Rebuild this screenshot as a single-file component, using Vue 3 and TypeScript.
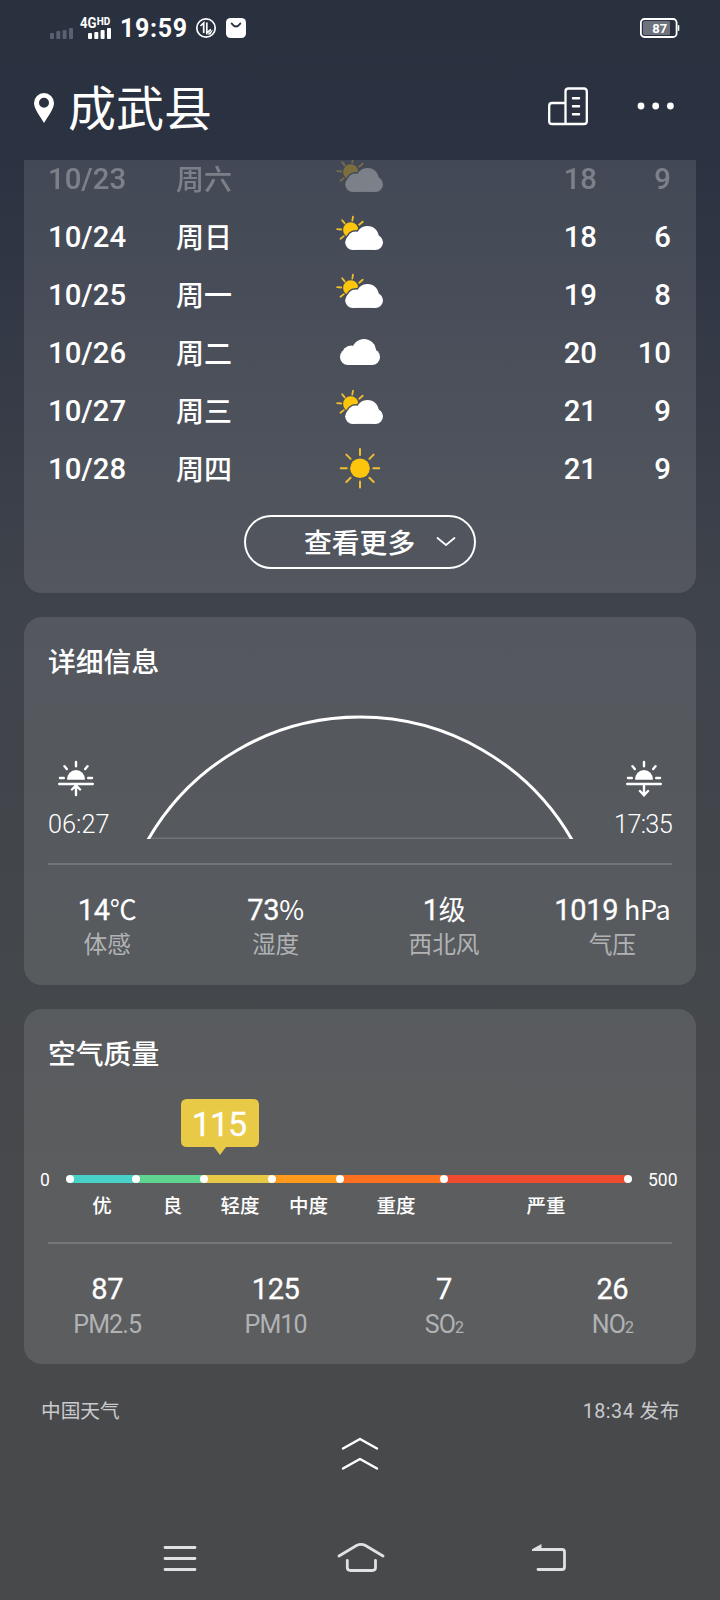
<script setup lang="ts">
type Sky = 'partly' | 'cloudy' | 'sunny'

interface Day {
  date: string
  week: string
  sky: Sky
  high: number
  low: number
}

interface Stat {
  value: string
  unit?: string
  label: string
  sub?: string
}

const days: Day[] = [
  { date: '10/23', week: '周六', sky: 'partly', high: 18, low: 9 },
  { date: '10/24', week: '周日', sky: 'partly', high: 18, low: 6 },
  { date: '10/25', week: '周一', sky: 'partly', high: 19, low: 8 },
  { date: '10/26', week: '周二', sky: 'cloudy', high: 20, low: 10 },
  { date: '10/27', week: '周三', sky: 'partly', high: 21, low: 9 },
  { date: '10/28', week: '周四', sky: 'sunny', high: 21, low: 9 },
]

const details: Stat[] = [
  { value: '14', unit: '℃', label: '体感' },
  { value: '73', unit: '%', label: '湿度' },
  { value: '1', unit: '级', label: '西北风' },
  { value: '1019', unit: ' hPa', label: '气压' },
]

const pollutants: Stat[] = [
  { value: '87', label: 'PM2.5' },
  { value: '125', label: 'PM10' },
  { value: '7', label: 'SO', sub: '2' },
  { value: '26', label: 'NO', sub: '2' },
]

const levels: string[] = ['优', '良', '轻度', '中度', '重度', '严重']
const stops: number[] = [4, 70, 138, 206, 274, 378, 562]
const colors: string[] = ['#48d1c8', '#5fd390', '#e8c847', '#fd9a1c', '#fd7020', '#ee4a2f']
const rays: number[] = [0, 45, 90, 135, 180, 225, 270, 315]
</script>

<template>
  <div class="screen">
    <div class="status">
      <svg class="signals" width="66" height="26" viewBox="0 0 66 26">
        <g fill="#596070">
          <rect x="2" y="18" width="4" height="6" rx="1" />
          <rect x="8.300" y="16" width="4" height="8" rx="1" />
          <rect x="14.600" y="15" width="4" height="9" rx="1" />
          <rect x="21" y="13" width="4" height="11" rx="1" />
        </g>
        <g fill="#fff">
          <rect x="40" y="18" width="4" height="6" rx="1" />
          <rect x="46.300" y="17" width="4" height="7" rx="1" />
          <rect x="52.600" y="15" width="4" height="9" rx="1" />
          <rect x="59" y="13" width="4" height="11" rx="1" />
          <text x="32" y="12.500" font-size="14" font-weight="700" textLength="16.500" lengthAdjust="spacingAndGlyphs">4G</text>
          <text x="48.800" y="9.500" font-size="10" font-weight="800" textLength="13.500" lengthAdjust="spacingAndGlyphs">HD</text>
        </g>
      </svg>
      <span class="clock">19:59</span>
      <svg class="round" width="22" height="22" viewBox="0 0 22 22" fill="none" stroke="#fff">
        <circle cx="11" cy="11" r="9.200" stroke-width="1.700" />
        <path d="M5.500 9 L8.700 6 V16 M11.800 5.500 V16 L16 12.500" stroke-width="1.700" />
        <path d="M12 17.500 L18 12.500 L15.500 17.500 Z" fill="#fff" stroke="none" />
      </svg>
      <svg class="bag" width="20" height="20" viewBox="0 0 20 20">
        <rect width="20" height="20" rx="4.500" fill="#fff" />
        <path d="M5.700 5.500 Q10 11.500 14.300 5.500" fill="none" stroke="#29303e" stroke-width="2" stroke-linecap="round" />
      </svg>
      <svg class="battery" width="42" height="22" viewBox="0 0 42 22">
        <rect x="1.900" y="2" width="35.700" height="18" rx="3.500" fill="none" stroke="#fff" stroke-width="1.800" />
        <rect x="4" y="4" width="27" height="14" rx="1.500" fill="#6d727c" />
        <rect x="38.800" y="8" width="1.500" height="6" rx=".7" fill="#fff" />
        <text x="20.700" y="15.600" font-size="13" font-weight="700" text-anchor="middle" fill="#fff">87</text>
      </svg>
    </div>

    <header class="header">
      <svg class="pin" width="20" height="31" viewBox="0 0 20 31">
        <path fill="#fff" fill-rule="evenodd" d="M10 0 A10 10 0 0 1 20 10 C20 16 14 23 10 30 C6 23 0 16 0 10 A10 10 0 0 1 10 0 Z M10 4.700 A5 5 0 1 0 10 14.700 A5 5 0 1 0 10 4.700 Z" />
      </svg>
      <h1>成武县</h1>
      <svg class="city" width="42" height="40" viewBox="0 0 42 40" fill="none" stroke="#fff" stroke-width="2.300" stroke-linecap="round">
        <path d="M18.500 16 H5 Q2.200 16 2.200 19 V34.500 Q2.200 37 5 37 H37 Q39.800 37 39.800 34.500 V4.500 Q39.800 1.500 37 1.500 H21.500 Q18.500 1.500 18.500 4.500 V37" />
        <path d="M26 11.300 H32 M26 19.300 H32 M26 27.300 H32" stroke-width="2.500" />
      </svg>
      <svg class="more" width="38" height="8" viewBox="0 0 38 8" fill="#fff">
        <circle cx="4" cy="4" r="3.400" /><circle cx="18.700" cy="4" r="3.400" /><circle cx="33.400" cy="4" r="3.400" />
      </svg>
    </header>

    <section class="card forecast">
      <div class="days">
        <div v-for="(d, i) in days" :key="d.date" class="day" :class="{ faded: i === 0 }">
          <span class="date">{{ d.date }}</span>
          <span class="week">{{ d.week }}</span>
          <svg class="sky" width="60" height="58" viewBox="0 0 60 58">
            <template v-if="d.sky === 'partly'">
              <mask :id="`gap-${i}`">
                <rect width="60" height="58" fill="#fff" />
                <g fill="#000" stroke="#000" stroke-width="3">
                  <circle cx="22.800" cy="33.300" r="7.600" />
                  <circle cx="25.600" cy="31" r="8.500" />
                  <circle cx="37.500" cy="28.300" r="11.300" />
                </g>
              </mask>
              <g :mask="`url(#gap-${i})`">
                <circle cx="20.700" cy="20.800" r="7.600" fill="#fec50d" />
                <path d="M22.300 11.700 L23 7.700 M29.200 15.700 L32.700 12.700 M14.700 14.300 L12.200 11.300 M11.200 20.500 L7.200 20.200 M13.800 27.100 L10.500 29.700" stroke="#efbe2e" stroke-width="1.800" stroke-linecap="round" />
              </g>
              <g fill="#fff">
                <circle cx="22.800" cy="33.300" r="7.600" />
                <circle cx="25.600" cy="31" r="8.500" />
                <circle cx="37.500" cy="28.300" r="11.300" />
                <circle cx="45.400" cy="33.300" r="7.600" />
                <rect x="22.800" y="27" width="22.600" height="13.900" />
              </g>
            </template>
            <g v-else-if="d.sky === 'cloudy'" fill="#fff">
              <circle cx="18" cy="32" r="8" />
              <circle cx="21" cy="29.500" r="9" />
              <circle cx="34" cy="26" r="12" />
              <circle cx="42" cy="32" r="8" />
              <rect x="18" y="26" width="24" height="14" />
            </g>
            <g v-else>
              <circle cx="30" cy="27.300" r="9.800" fill="#fec50d" />
              <path v-for="r in rays" :key="r" d="M30 14 V8" :transform="`rotate(${r} 30 27.300)`" stroke="#efbe2e" stroke-width="2" stroke-linecap="round" />
            </g>
          </svg>
          <span class="high">{{ d.high }}</span>
          <span class="low">{{ d.low }}</span>
        </div>
      </div>
      <button class="expand">
        <span>查看更多</span>
        <svg width="20" height="10" viewBox="0 0 20 10" fill="none" stroke="#fff" stroke-width="1.700" stroke-linecap="round" stroke-linejoin="round">
          <path d="M1.500 1 L10 8 L18.500 1" />
        </svg>
      </button>
    </section>

    <section class="card detail">
      <h2>详细信息</h2>
      <div class="sun-row">
        <div class="sun-time">
          <svg width="38" height="38" viewBox="0 0 38 38" fill="none" stroke="#fff" stroke-width="2.400" stroke-linecap="round">
            <path d="M10 20.800 A9 9.800 0 0 1 28 20.800 Z" fill="#fff" stroke="none" />
            <path d="M19 3 V7.200 M7.500 7.200 L9.800 10 M30.500 7.200 L28.200 10 M3 19 H6.800 M31.200 19 H35 M2.200 25 H35.800 M19 27 V36 M15 30.500 L19 26.500 L23 30.500" />
          </svg>
          <span>06:27</span>
        </div>
        <svg class="arc" width="428" height="124" viewBox="0 0 428 124" fill="none">
          <path d="M5 123.200 H423" stroke="#fff" stroke-opacity=".16" stroke-width="1.500" />
          <path d="M1.600 125.500 A244.500 244.500 0 0 1 426.400 125.500" stroke="#fff" stroke-width="3" />
        </svg>
        <div class="sun-time right">
          <svg width="38" height="38" viewBox="0 0 38 38" fill="none" stroke="#fff" stroke-width="2.400" stroke-linecap="round">
            <path d="M10 20.800 A9 9.800 0 0 1 28 20.800 Z" fill="#fff" stroke="none" />
            <path d="M19 3 V7.200 M7.500 7.200 L9.800 10 M30.500 7.200 L28.200 10 M3 19 H6.800 M31.200 19 H35 M2.200 25 H35.800 M19 26 V36 M15 32 L19 36.300 L23 32" />
          </svg>
          <span>17:35</span>
        </div>
      </div>
      <div class="rule"></div>
      <div class="stats">
        <div v-for="s in details" :key="s.label" class="stat">
          <div class="value">{{ s.value }}<span class="unit">{{ s.unit }}</span></div>
          <div class="label">{{ s.label }}</div>
        </div>
      </div>
    </section>

    <section class="card air">
      <h2>空气质量</h2>
      <div class="badge">115</div>
      <div class="scale">
        <span class="min">0</span>
        <svg class="track" width="566" height="8" viewBox="0 0 566 8">
          <rect v-for="(c, i) in colors" :key="c" :x="stops[i]" y="0" :width="stops[i + 1] - stops[i]" height="8" :fill="c" />
          <circle v-for="s in stops" :key="s" :cx="s" cy="4" r="4" fill="#fff" />
        </svg>
        <span class="max">500</span>
      </div>
      <div class="levels">
        <span v-for="l in levels" :key="l">{{ l }}</span>
      </div>
      <div class="rule"></div>
      <div class="stats">
        <div v-for="s in pollutants" :key="s.label" class="stat">
          <div class="value">{{ s.value }}</div>
          <div class="label latin">{{ s.label }}<small v-if="s.sub">{{ s.sub }}</small></div>
        </div>
      </div>
    </section>

    <footer class="source">
      <span>中国天气</span>
      <span class="time">18:34 发布</span>
    </footer>
    <svg class="pull" width="40" height="36" viewBox="0 0 40 36" fill="none" stroke="#fff" stroke-width="2.500" stroke-linecap="round" stroke-linejoin="round">
      <path d="M3 12.500 L20 3 L37 12.500 M3 32.500 L20 23 L37 32.500" />
    </svg>
    <nav class="nav">
      <svg width="36" height="32" viewBox="0 0 36 32" stroke="#e0e1e3" stroke-width="2.800" stroke-linecap="round">
        <path d="M3 5.500 H33 M3 16.500 H33 M3 27.500 H33" />
      </svg>
      <svg class="home" width="50" height="32" viewBox="0 0 50 32" fill="none" stroke="#e0e1e3" stroke-width="2.800" stroke-linecap="round">
        <path d="M3 14 L20.500 3.500 Q25 1.200 29.500 3.500 L47 14" />
        <path d="M11.300 18.500 V25.500 Q11.300 28.500 14.500 28.500 H36.300 Q39.500 28.500 39.500 25.500 V18.500" />
      </svg>
      <svg width="38" height="32" viewBox="0 0 38 32" fill="none" stroke="#e0e1e3" stroke-width="2.800" stroke-linecap="round">
        <path d="M7 7.500 H32 Q34.500 7.500 34.500 10 V25 Q34.500 27.500 32 27.500 H8" />
        <path d="M2 8.900 V7.200 L11.500 2 V8.900 Z" fill="#e0e1e3" stroke="none" />
      </svg>
    </nav>
  </div>
</template>

<style>
html,
body {
  margin: 0;
  background: #48494c;
}
</style>

<style scoped>
.screen {
  box-sizing: border-box;
  width: 720px;
  height: 1600px;
  overflow: hidden;
  display: flex;
  flex-direction: column;
  color: #fff;
  font-family: Roboto, "Noto Sans CJK SC", sans-serif;
  background: linear-gradient(180deg, #29303e 0, #2b3241 160px, #343a46 350px, #3f434b 600px, #44474b 990px, #48494c 1200px, #48494b 1600px);
}
.status {
  height: 56px;
  display: flex;
  align-items: center;
  padding: 0 39px 0 48px;
}
.clock {
  margin-left: 6px;
  padding-top: 1px;
  width: 70px;
  font-size: 25px;
  line-height: 30px;
  font-weight: 700;
  letter-spacing: 0.7px;
}
.round { margin-left: 5px; }
.bag { margin-left: 9px; }
.battery { margin-left: auto; }
.header {
  height: 104px;
  display: flex;
  align-items: center;
  padding: 0 45px 4px 34px;
  box-sizing: border-box;
}
.pin { margin-top: 4px; }
.header h1 {
  margin: 8px auto 0 14px;
  font-size: 48px;
  line-height: 60px;
  font-weight: 400;
}
.city { margin: 2px 48px 0 0; }
.card {
  box-sizing: border-box;
  margin: 0 24px 24px;
  border-radius: 18px;
  background: rgba(255, 255, 255, 0.11);
  overflow: hidden;
  flex: none;
}
.forecast {
  height: 433px;
  border-radius: 0 0 18px 18px;
  display: flex;
  flex-direction: column;
  align-items: center;
}
.days {
  width: 100%;
  margin-top: -10px;
}
.day {
  height: 58px;
  padding: 0 25px 0 24px;
  display: grid;
  grid-template-columns: 128px 154px 60px 1fr 74px;
  grid-template-rows: 58px;
  align-items: start;
  font-size: 29.300px;
  line-height: 58px;
  font-weight: 500;
}
.faded { opacity: 0.3; }
.week {
  line-height: 61px;
  font-size: 28px;
}
.sky {
  display: block;
  margin-top: 0.5px;
}
.high,
.low { text-align: right; }
.expand {
  box-sizing: border-box;
  width: 232px;
  height: 54px;
  margin: 17px 0 0;
  padding: 0 18px 0 58px;
  display: flex;
  align-items: center;
  justify-content: space-between;
  border: 2px solid #fff;
  border-radius: 27px;
  background: none;
  color: #fff;
  font: 500 27.800px/48px Roboto, "Noto Sans CJK SC", sans-serif;
}
.expand span { padding-top: 4px; }
h2 {
  margin: 0;
  padding: 0 24px;
  font-size: 27.800px;
  line-height: 40px;
  font-weight: 500;
}
.detail {
  height: 368px;
  padding-top: 26px;
}
.sun-row {
  height: 124px;
  margin-top: 32px;
  padding: 0 24px;
  display: flex;
  justify-content: space-between;
}
.sun-time {
  width: 70px;
  padding-top: 44px;
  font-size: 25.300px;
  font-weight: 300;
  line-height: 30px;
}
.sun-time svg {
  display: block;
  margin: 0 0 13px 9px;
}
.sun-time.right {
  text-align: right;
  letter-spacing: -0.7px;
}
.sun-time.right svg { margin-left: 23px; }
.arc { display: block; }
.rule {
  height: 2px;
  margin: 24px 24px 0;
  background: rgba(255, 255, 255, 0.16);
}
.stats {
  display: grid;
  grid-template-columns: repeat(4, 168.400px);
  margin: 27px 0 0 -1px;
  text-align: center;
  white-space: pre;
}
.value {
  height: 36px;
  line-height: 36px;
  font-size: 29px;
  -webkit-text-stroke: 0.3px #fff;
  letter-spacing: -0.4px;
}
.detail .value {
  line-height: 33px;
  letter-spacing: -0.3px;
}
.unit {
  font-family: "Noto Sans CJK SC", sans-serif;
  font-size: 27px;
  -webkit-text-stroke: 0;
}
.label {
  height: 34px;
  line-height: 34px;
  font-size: 23.700px;
  color: #b0b2b4;
}
.label.latin {
  font-size: 25px;
  line-height: 35px;
  letter-spacing: -0.9px;
}
.label small { font-size: 16px; }
.air {
  height: 355px;
  padding-top: 26px;
}
.badge {
  width: 78px;
  height: 56px;
  margin: 24px 0 0 157px;
  background: #e9ca46;
  clip-path: path("M6 0 H72 Q78 0 78 6 V42 Q78 48 72 48 H45 L39 56 L33 48 H6 Q0 48 0 42 V6 Q0 0 6 0 Z");
  font-size: 34px;
  line-height: 51px;
  letter-spacing: -1px;
  text-indent: -2px;
  -webkit-text-stroke: 0.3px #fff;
  text-align: center;
}
.scale {
  height: 24px;
  margin-top: 12px;
  display: flex;
  align-items: center;
  font-size: 17.500px;
}
.min {
  width: 26px;
  padding: 1px 0 0 16px;
}
.max { padding-top: 1px; }
.track {
  flex: none;
  margin-right: 16px;
}
.levels {
  margin: 0 0 0 46px;
  display: grid;
  grid-template-columns: 64px 77px 58px 79px 96px 204px;
  height: 28px;
  line-height: 31px;
  font-size: 19.500px;
  font-weight: 500;
  text-align: center;
}
.air .rule { margin-top: 23px; }
.source {
  height: 28px;
  margin-top: 10px;
  padding: 0 40px 0 41px;
  display: flex;
  justify-content: space-between;
  font-size: 19.700px;
  line-height: 28px;
  color: #c9cacc;
}
.time { letter-spacing: 0.5px; }
.pull {
  margin: 10px auto 0;
  flex: none;
}
.nav {
  margin-top: 70px;
  padding: 0 152px 0 162px;
  display: flex;
  justify-content: space-between;
}
.home { margin: 0 3px 0 -3px; }
</style>
